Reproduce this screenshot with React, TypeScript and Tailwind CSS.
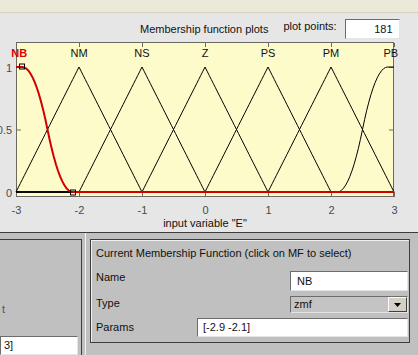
import React from "react";

const X = (v: number) => 16 + (v + 3) * 63;
const Y = (m: number) => 192 - 125 * m;

const xs: number[] = Array.from({ length: 181 }, (_, i) => -3 + i / 30);

const zmf = (x: number, a: number, b: number) => {
  if (x <= a) return 1;
  const m = (a + b) / 2;
  if (x <= m) return 1 - 2 * ((x - a) / (b - a)) ** 2;
  if (x <= b) return 2 * ((x - b) / (b - a)) ** 2;
  return 0;
};
const smf = (x: number, a: number, b: number) => 1 - zmf(x, a, b);
const trimf = (x: number, a: number, b: number, c: number) => {
  if (x <= a || x >= c) return 0;
  if (x <= b) return (x - a) / (b - a);
  return (c - x) / (c - b);
};

const pts = (f: (x: number) => number) =>
  xs.map((x) => `${X(x).toFixed(2)},${Y(f(x)).toFixed(2)}`).join(" ");

const mfs: { name: string; f: (x: number) => number; lx: number }[] = [
  { name: "NM", f: (x) => trimf(x, -3, -2, -1), lx: -2 },
  { name: "NS", f: (x) => trimf(x, -2, -1, 0), lx: -1 },
  { name: "Z", f: (x) => trimf(x, -1, 0, 1), lx: 0 },
  { name: "PS", f: (x) => trimf(x, 0, 1, 2), lx: 1 },
  { name: "PM", f: (x) => trimf(x, 1, 2, 3), lx: 2 },
  { name: "PB", f: (x) => smf(x, 2.1, 2.9), lx: 2.95 },
];

function Chart() {
  const ticks = [-3, -2, -1, 0, 1, 2, 3];
  return (
    <svg
      width={418}
      height={190}
      viewBox="0 42 418 190"
      className="block"
      style={{ fontFamily: '"Liberation Sans", Arial, sans-serif' }}
    >
      <rect x={16.5} y={42.5} width={377} height={154} fill="#fefbcb" stroke="#6a6a62" strokeWidth={1} />
      {ticks.map((t) => (
        <g key={t}>
          <line x1={X(t) + 0.5} y1={43} x2={X(t) + 0.5} y2={47} stroke="#6a6a62" />
          <line x1={X(t) + 0.5} y1={192} x2={X(t) + 0.5} y2={197} stroke="#6a6a62" />
          <text x={X(t) + 0.5} y={213.5} textAnchor="middle" fontSize={11} fill="#4a4a4a">
            {t}
          </text>
        </g>
      ))}
      {[0, 0.5, 1].map((m) => (
        <g key={m}>
          <line x1={17} y1={Y(m) + 0.5} x2={21} y2={Y(m) + 0.5} stroke="#6a6a62" />
          <line x1={389} y1={Y(m) + 0.5} x2={394} y2={Y(m) + 0.5} stroke="#6a6a62" />
          <text x={12} y={Y(m) + 4.5} textAnchor="end" fontSize={11} fill="#4a4a4a">
            {m}
          </text>
        </g>
      ))}
      {mfs.map((mf) => (
        <g key={mf.name}>
          <polyline points={pts(mf.f)} fill="none" stroke="#000" strokeWidth={1} />
          <text x={X(mf.lx)} y={56.5} textAnchor="middle" fontSize={11} fill="#111">
            {mf.name}
          </text>
        </g>
      ))}
      <polyline points={pts((x) => zmf(x, -2.9, -2.1))} fill="none" stroke="#d00000" strokeWidth={2} />
      <rect x={19.5} y={64} width={5} height={5} fill="none" stroke="#000" />
      <rect x={70.5} y={190} width={5} height={5} fill="none" stroke="#000" />
      <text x={X(-2.95)} y={56.5} textAnchor="middle" fontSize={11} fontWeight="bold" fill="#e00000">
        NB
      </text>
      <text x={205} y={227} textAnchor="middle" fontSize={11} fill="#111">
        input variable "E"
      </text>
    </svg>
  );
}

export default function App() {
  return (
    <div
      className="w-[418px] h-[355px] overflow-hidden bg-[#e6e6e6] text-[11px] leading-[13px] text-[#111]"
      style={{ fontFamily: '"Liberation Sans", Arial, sans-serif' }}
    >
      <div className="h-[13px] bg-[#ece9d8] border-b border-[#d5d2c0]" />
      <div className="h-[29px] flex items-start pl-[140px]">
        <div className="mt-[10px]">Membership function plots</div>
        <div className="mt-[7px] ml-[15px]">plot points:</div>
        <div className="mt-[6px] ml-[8px] w-[55px] h-[20px] bg-white border border-t-[#6c6c6c] border-l-[#6c6c6c] border-b-[#e4e4e4] border-r-[#e4e4e4] flex items-center justify-end pr-[6px]">
          181
        </div>
      </div>
      <Chart />
      <div className="h-[123px] bg-[#c0c0c0] border-t border-[#3c3c3c] flex relative">
        <div className="w-[82px] mt-[6px] border-t border-r border-[#3c3c3c] flex flex-col">
          <div className="h-[65px]" />
          <div className="pl-[2px] h-[13px] text-[#555]">t</div>
          <div className="mt-[20px] w-[78px] h-[20px] bg-white border border-t-[#6c6c6c] border-l-[#6c6c6c] border-b-[#e4e4e4] border-r-[#e4e4e4] pl-[3px] flex items-center">
            3]
          </div>
        </div>
        <div className="w-[1px] ml-[3px] bg-[#f4f4f4]" />
        <div className="ml-[4px] mt-[6px] w-[320px] h-[104px] border border-[#3c3c3c] shadow-[inset_1px_1px_0_#f0f0f0] flex flex-col pl-[5px] pr-[1px]">
          <div className="h-[26px] flex items-center">Current Membership Function (click on MF to select)</div>
          <div className="mt-[5px] h-[20px] flex items-start justify-between">
            <div className="mt-[0px]">Name</div>
            <div className="w-[118px] h-[20px] bg-white border border-t-[#6c6c6c] border-l-[#6c6c6c] border-b-[#e4e4e4] border-r-[#e4e4e4] pl-[6px] flex items-center">
              NB
            </div>
          </div>
          <div className="mt-[5px] h-[17px] flex items-start justify-between">
            <div className="mt-[1px]">Type</div>
            <div className="w-[118px] h-[17px] bg-[#c4c4c4] border border-t-[#6c6c6c] border-l-[#6c6c6c] border-b-[#e4e4e4] border-r-[#e4e4e4] flex items-center">
              <div className="flex-1 pl-[3px]">zmf</div>
              <div className="w-[19px] h-[15px] bg-[#d4d0c8] border border-t-[#fafafa] border-l-[#fafafa] border-b-[#404040] border-r-[#404040] flex items-center justify-center">
                <svg width="7" height="4" viewBox="0 0 7 4">
                  <polygon points="0,0 7,0 3.5,4" fill="#000" />
                </svg>
              </div>
            </div>
          </div>
          <div className="mt-[5px] h-[19px] flex items-center justify-between">
            <div>Params</div>
            <div className="w-[211px] h-[19px] bg-white border border-t-[#6c6c6c] border-l-[#6c6c6c] border-b-[#e4e4e4] border-r-[#e4e4e4] pl-[5px] flex items-center">
              [-2.9 -2.1]
            </div>
          </div>
        </div>
      </div>
    </div>
  );
}
